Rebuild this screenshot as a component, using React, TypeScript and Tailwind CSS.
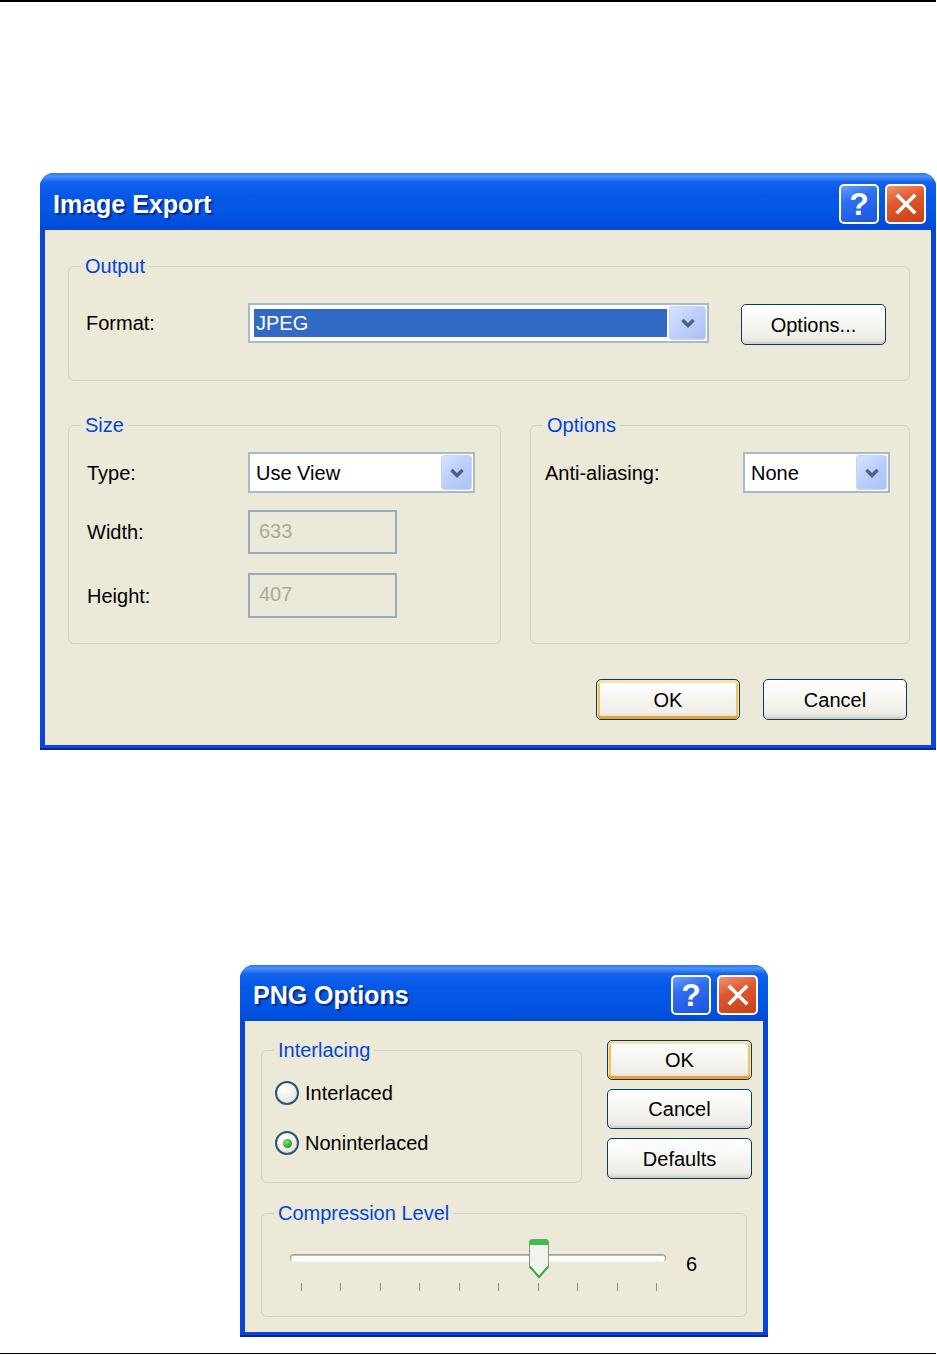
import React from 'react';

const face = 'bg-[#ece9d8]';

function TitleButtons() {
  return (
    <div className="flex items-center gap-[6px]">
      <div className="flex h-[40px] w-[40px] items-center justify-center rounded-[5px] border-2 border-white bg-[linear-gradient(160deg,#6aa0fb_0%,#2f6ef0_35%,#1c55e0_100%)] text-[32px] font-bold leading-none text-white">
        ?
      </div>
      <div className="flex h-[40px] w-[41px] items-center justify-center rounded-[5px] border-2 border-white bg-[linear-gradient(160deg,#f0936c_0%,#e0582f_40%,#c63f16_100%)]">
        <svg width="24" height="24" viewBox="0 0 24 24">
          <path d="M4 4 L20 20 M20 4 L4 20" stroke="#ffffff" strokeWidth="3.6" strokeLinecap="square" />
        </svg>
      </div>
    </div>
  );
}

function XPWindow({
  title,
  className,
  titleH,
  children,
}: {
  title: string;
  className: string;
  titleH: string;
  children: React.ReactNode;
}) {
  return (
    <div className={`flex flex-col overflow-hidden rounded-t-[14px] border-b-2 border-[#0b239a] bg-[#0845d8] px-[5px] pb-[3px] ${className}`}>
      <div
        className={`-mx-[5px] flex items-center justify-between bg-[linear-gradient(180deg,#2c74f2_0%,#4d92fb_6%,#1262ee_16%,#0558e6_40%,#0354e2_75%,#0149d6_100%)] pt-[4px] pl-[13px] pr-[10px] ${titleH}`}
      >
        <span className="mt-[2px] text-[25px] font-bold text-white [text-shadow:2px_2px_1px_#0a2b8c]">{title}</span>
        <TitleButtons />
      </div>
      {children}
    </div>
  );
}

function GroupBox({ label, className, children }: { label: string; className: string; children?: React.ReactNode }) {
  return (
    <div className={`relative rounded-[6px] border border-[#d0d0bf] ${className}`}>
      <span className={`absolute -top-[13px] left-[12px] ${face} px-[4px] text-[20px] leading-[24px] text-[#0046d5]`}>{label}</span>
      {children}
    </div>
  );
}

function XPButton({ label, def, className }: { label: string; def?: boolean; className: string }) {
  return (
    <div
      className={`flex items-center justify-center rounded-[5px] border border-[#003c74] bg-[linear-gradient(180deg,#ffffff_0%,#f6f6f2_45%,#eeede6_85%,#dcd7cb_100%)] text-[20px] text-black ${
        def ? 'shadow-[inset_0_2px_0_1px_#fde2a6,inset_0_-2px_0_1px_#f1a02c,inset_0_0_0_3px_#f7c15a]' : 'shadow-[inset_0_-2px_0_0_#d6d0c5]'
      } ${className}`}
    >
      {label}
    </div>
  );
}

function DropButton({ className }: { className: string }) {
  return (
    <div className={`flex items-center justify-center rounded-[3px] border border-[#c5d5fa] bg-[linear-gradient(135deg,#d8e3fd_0%,#bccefa_50%,#adc2f4_100%)] ${className}`}>
      <svg width="16" height="12" viewBox="0 0 16 12">
        <path d="M2.5 3 L8 8.5 L13.5 3" stroke="#4d6185" strokeWidth="3.4" fill="none" />
      </svg>
    </div>
  );
}

function Combo({ value, selected, className, btn }: { value: string; selected?: boolean; className: string; btn: string }) {
  return (
    <div className={`flex items-stretch border-2 border-[#a5b9cf] bg-white p-[1px] ${className}`}>
      <div className="flex flex-1 items-stretch p-[3px] pr-[2px]">
        <div className={`flex flex-1 items-center pl-[2px] text-[20px] ${selected ? 'bg-[#316ac5] text-white' : 'text-black'}`}>
          {value}
        </div>
      </div>
      <DropButton className={btn} />
    </div>
  );
}

function Field({ value, className }: { value: string; className: string }) {
  return (
    <div className={`flex items-center border-2 border-[#94adc7] ${face} pl-[9px] pb-[3px] text-[20px] text-[#aca899] ${className}`}>
      {value}
    </div>
  );
}

function Radio({ label, checked }: { label: string; checked?: boolean }) {
  return (
    <div className="flex h-[24px] items-center gap-[6px]">
      <div className="flex h-[24px] w-[24px] items-center justify-center rounded-full border-2 border-[#2a5478] bg-[radial-gradient(circle_at_35%_30%,#ffffff_0%,#f2f1ec_45%,#d8d5c8_100%)]">
        {checked && <div className="h-[9px] w-[9px] rounded-full bg-[radial-gradient(circle_at_40%_35%,#8ee08e_0%,#2fae2f_55%,#1b8a1b_100%)]" />}
      </div>
      <span className="text-[20px] text-black">{label}</span>
    </div>
  );
}

function Slider() {
  const ticks = Array.from({ length: 10 }, (_, i) => i);
  return (
    <div className="relative h-[60px] w-[376px]">
      <div className="absolute left-0 right-0 top-[16px] h-[8px] rounded-full border border-[#a09f98] border-b-[#f4f3ee] bg-white shadow-[inset_0_1px_0_#b9b8b1]" />
      <svg className="absolute left-[238px] top-0" width="22" height="42" viewBox="0 0 22 42">
        <path d="M1.5 4 Q1.5 1.5 4 1.5 H18 Q20.5 1.5 20.5 4 V29 L11 39.5 L1.5 29 Z" fill="#f2f2ee" stroke="#8f8f88" strokeWidth="1" />
        <path d="M1.5 7 V4 Q1.5 1.5 4 1.5 H18 Q20.5 1.5 20.5 4 V7 Z" fill="#3fbf4a" />
        <path d="M1.8 28.5 L11 39 L20.2 28.5" stroke="#35a83f" strokeWidth="2" fill="none" />
      </svg>
      <div className="absolute left-[11px] top-[45px] flex w-[356px] justify-between">
        {ticks.map((t) => (
          <div key={t} className="h-[8px] w-px bg-[#8f8f8f]" />
        ))}
      </div>
    </div>
  );
}

export default function App() {
  return (
    <div className="flex h-[1355px] w-[937px] flex-col bg-white font-['Liberation_Sans',Arial,sans-serif]">
      <div className="h-[2px] w-[936px] bg-black" />

      {/* Image Export */}
      <XPWindow title="Image Export" className="ml-[40px] mt-[171px] w-[896px]" titleH="h-[57px]">
        <div className={`flex h-[515px] flex-col ${face} pl-[23px] pr-[21px] pt-[36px]`}>
          <GroupBox label="Output" className="h-[115px] pl-[17px] pt-[36px]">
            <div className="flex items-start">
              <span className="flex h-[40px] w-[162px] items-center text-[20px] text-black">Format:</span>
              <Combo value="JPEG" selected className="h-[40px] w-[461px]" btn="w-[37px]" />
              <XPButton label="Options..." className="ml-[32px] mt-[1px] h-[41px] w-[145px]" />
            </div>
          </GroupBox>

          <div className="mt-[44px] flex h-[219px] gap-[29px]">
            <GroupBox label="Size" className="w-[433px] pl-[18px] pt-[26px]">
              <div className="flex h-[41px] items-center">
                <span className="w-[161px] text-[20px] text-black">Type:</span>
                <Combo value="Use View" className="h-[41px] w-[227px]" btn="w-[31px]" />
              </div>
              <div className="mt-[17px] flex h-[44px] items-center">
                <span className="w-[161px] text-[20px] text-black">Width:</span>
                <Field value="633" className="h-[44px] w-[149px]" />
              </div>
              <div className="mt-[19px] flex h-[45px] items-center">
                <span className="w-[161px] text-[20px] text-black">Height:</span>
                <Field value="407" className="h-[45px] w-[149px]" />
              </div>
            </GroupBox>
            <GroupBox label="Options" className="w-[380px] pl-[14px] pt-[26px]">
              <div className="flex h-[41px] items-center">
                <span className="w-[198px] text-[20px] text-black">Anti-aliasing:</span>
                <Combo value="None" className="h-[41px] w-[147px]" btn="w-[31px]" />
              </div>
            </GroupBox>
          </div>

          <div className="mr-[3px] mt-[35px] flex justify-end gap-[23px]">
            <XPButton label="OK" def className="h-[41px] w-[144px]" />
            <XPButton label="Cancel" className="h-[41px] w-[144px]" />
          </div>
        </div>
      </XPWindow>

      {/* PNG Options */}
      <XPWindow title="PNG Options" className="ml-[240px] mt-[215px] w-[528px]" titleH="h-[56px]">
        <div className={`flex h-[311px] flex-col ${face} pl-[16px]`}>
          <div className="flex items-start">
            <GroupBox label="Interlacing" className="mt-[29px] h-[133px] w-[321px] pl-[13px] pt-[30px]">
              <Radio label="Interlaced" />
              <div className="mt-[26px]">
                <Radio label="Noninterlaced" checked />
              </div>
            </GroupBox>
            <div className="ml-[25px] mt-[19px] flex w-[145px] flex-col gap-[9px]">
              <XPButton label="OK" def className="h-[40px] w-[145px]" />
              <XPButton label="Cancel" className="h-[40px] w-[145px]" />
              <XPButton label="Defaults" className="h-[41px] w-[145px]" />
            </div>
          </div>

          <GroupBox label="Compression Level" className="mt-[30px] flex h-[104px] w-[486px] items-start pl-[28px] pt-[24px]">
            <Slider />
            <span className="ml-[20px] mt-[14px] text-[20px] leading-[24px] text-black">6</span>
          </GroupBox>
        </div>
      </XPWindow>

      <div className="mt-[16px] h-px w-[936px] bg-black" />
    </div>
  );
}
